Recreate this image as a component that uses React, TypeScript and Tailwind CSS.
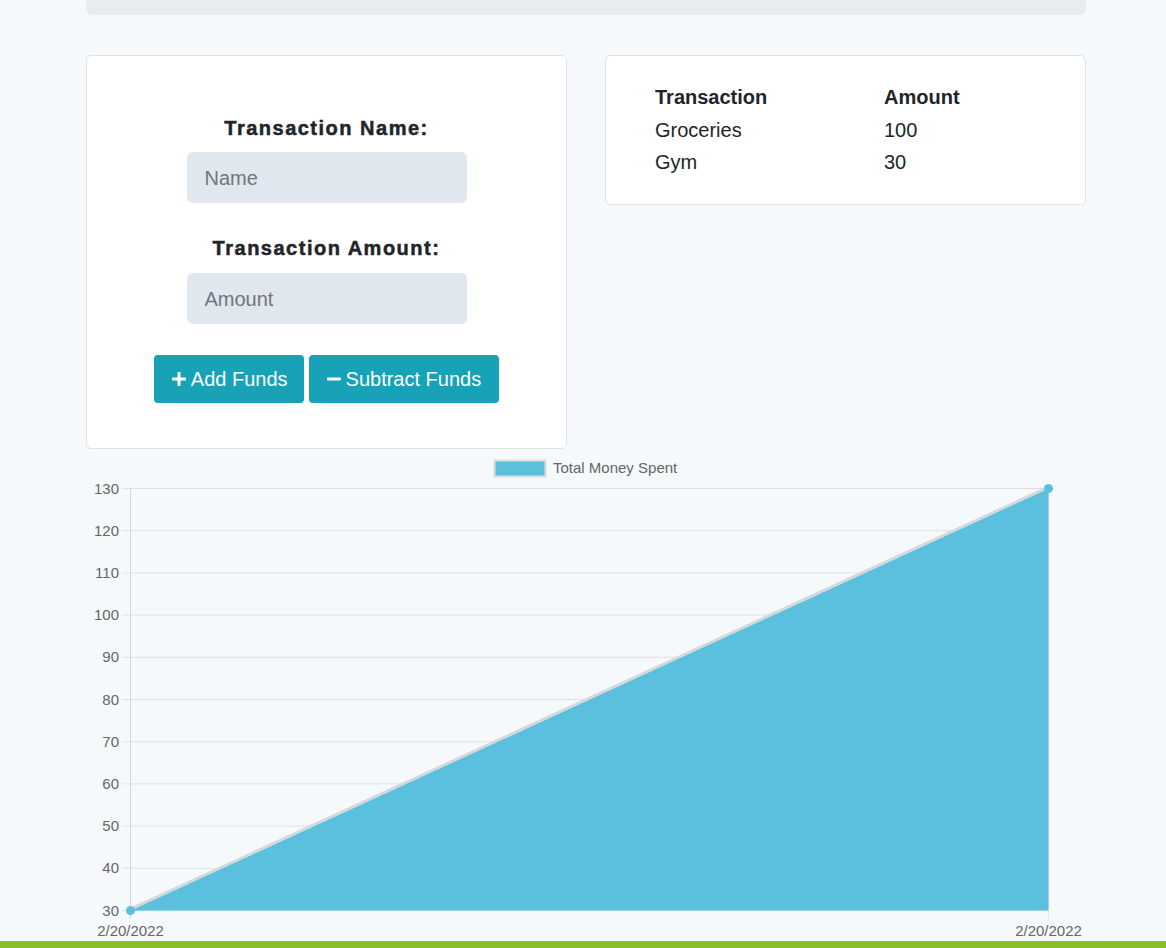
import React from "react";
import { FaPlus, FaMinus } from "react-icons/fa";

const font = { fontFamily: '"Liberation Sans", Arial, sans-serif' };

function Chart() {
  const top = 33.5;
  const step = 42.2;
  const values = [130, 120, 110, 100, 90, 80, 70, 60, 50, 40, 30];
  const bottom = top + step * 10;
  return (
    <svg width="1000" height="486" viewBox="0 0 1000 486" className="block" style={font}>
      <rect x="408.5" y="5.5" width="51" height="16" fill="#5bc0de" stroke="#dcdcdc" strokeWidth="2" />
      <text x="467" y="18" fontSize="15" fill="#666">Total Money Spent</text>
      {values.map((v, i) => {
        const y = top + i * step;
        return (
          <g key={v}>
            <line x1="36" x2="962" y1={y} y2={y} stroke="#e1e1e1" strokeWidth="1" />
            <text x="33" y={y + 5} fontSize="15" fill="#666" textAnchor="end">
              {v}
            </text>
          </g>
        );
      })}
      <line x1="44.5" x2="44.5" y1={top} y2={bottom + 8} stroke="#d6d6d6" strokeWidth="1" />
      <line x1="962.5" x2="962.5" y1={top} y2={bottom + 8} stroke="#e4e4e4" strokeWidth="1" />
      <polygon points={`44.5,${bottom} 962.5,${top} 962.5,${bottom}`} fill="#5bc0de" />
      <line x1="44.5" y1={bottom - 1.5} x2="962.5" y2={top - 1.5} stroke="#d6d6d6" strokeWidth="2.5" />
      <circle cx="44.5" cy={bottom} r="4.5" fill="#5bc0de" />
      <circle cx="962.5" cy={top} r="4.5" fill="#5bc0de" />
      <text x="44.5" y="481" fontSize="15" fill="#666" textAnchor="middle">2/20/2022</text>
      <text x="962.5" y="481" fontSize="15" fill="#666" textAnchor="middle">2/20/2022</text>
    </svg>
  );
}

export default function App() {
  return (
    <div className="min-h-[948px] bg-[#f5f9fc] flex flex-col" style={font}>
      <div className="w-[1000px] ml-[86px] flex-1">
        <div className="h-[15px] bg-[#e8ecef] rounded-b-[6px]" />
        <div className="mt-[40px] flex gap-[38px] items-start">
          <div className="w-[481px] h-[394px] bg-white border border-[#dfe3e7] rounded-[5px] flex flex-col items-center pt-[60px]">
            <div className="text-[20px] leading-[24px] font-bold tracking-[1.5px] text-[#212529] [-webkit-text-stroke:0.5px_#212529]">
              Transaction Name:
            </div>
            <input
              placeholder="Name"
              className="mt-[12px] w-[280px] h-[51px] rounded-[6px] bg-[#e1e7ef] px-[18px] pt-[2px] text-[20px] text-[#212529] placeholder:text-[#6f7680] outline-none"
            />
            <div className="mt-[33px] text-[20px] leading-[24px] font-bold tracking-[1.5px] text-[#212529] [-webkit-text-stroke:0.5px_#212529]">
              Transaction Amount:
            </div>
            <input
              placeholder="Amount"
              className="mt-[13px] w-[280px] h-[51px] rounded-[6px] bg-[#e1e7ef] px-[18px] pt-[2px] text-[20px] text-[#212529] placeholder:text-[#6f7680] outline-none"
            />
            <div className="mt-[31px] flex gap-[5px]">
              <button className="h-[48px] pl-[17px] pr-[16px] bg-[#17a2b8] text-white text-[20px] rounded-[4px] flex items-center gap-[4px]">
                <FaPlus className="w-[16px] h-[16px]" />
                <span>Add Funds</span>
              </button>
              <button className="h-[48px] pl-[17px] pr-[18px] bg-[#17a2b8] text-white text-[20px] rounded-[4px] flex items-center gap-[4px]">
                <FaMinus className="w-[16px] h-[16px]" />
                <span>Subtract Funds</span>
              </button>
            </div>
          </div>
          <div className="w-[481px] h-[150px] bg-white border border-[#dfe3e7] rounded-[5px] pt-[25px] pl-[49px] text-[20px] text-[#212529]">
            <div className="grid grid-cols-[229px_1fr] leading-[33px]">
              <div className="font-bold">Transaction</div>
              <div className="font-bold">Amount</div>
              <div className="leading-[32px]">Groceries</div>
              <div className="leading-[32px]">100</div>
              <div className="leading-[32px]">Gym</div>
              <div className="leading-[32px]">30</div>
            </div>
          </div>
        </div>
        <div className="mt-[6px]">
          <Chart />
        </div>
      </div>
      <div className="h-[7px] bg-[#8abd2a]" />
    </div>
  );
}
